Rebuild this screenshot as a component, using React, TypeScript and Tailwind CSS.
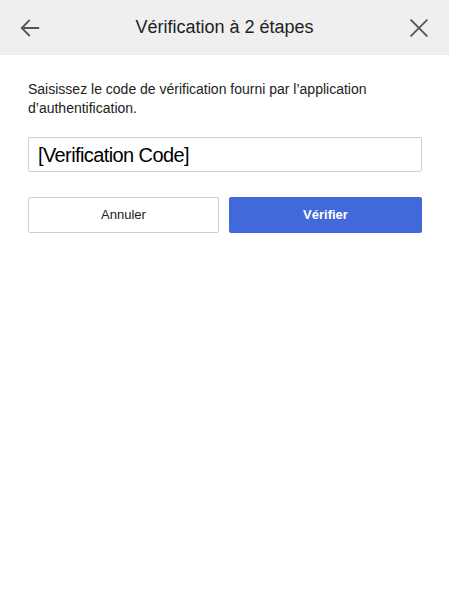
export default function App() {
  return (
    <div className="flex h-[600px] w-[449px] flex-col bg-white font-['Liberation_Sans',Arial,sans-serif] text-[#202124]">
      {/* Header */}
      <div className="flex h-[55px] flex-none items-center justify-between bg-[#efefef] pl-[19px] pr-[19px]">
        <svg width="22" height="22" viewBox="0 0 24 24" fill="none" stroke="#555" strokeWidth="2" strokeLinecap="square">
          <path d="M21 12H4M11 4l-8 8 8 8" />
        </svg>
        <div className="text-[18px] text-[#222]">Vérification à 2 étapes</div>
        <svg width="22" height="22" viewBox="0 0 24 24" fill="none" stroke="#555" strokeWidth="2" strokeLinecap="square">
          <path d="M3.5 3.5l17 17M20.5 3.5l-17 17" />
        </svg>
      </div>

      {/* Body */}
      <div className="flex flex-col pl-[28px] pr-[27px] pt-[25px]">
        <p className="text-[14px] leading-[19px] text-[#222]">
          Saisissez le code de vérification fourni par l’application d’authentification.
        </p>
        <div className="mt-[19px] flex h-[35px] items-center rounded-[2px] border border-[#cfcfcf] px-[9px] text-[20px] tracking-[-0.6px] text-black">
          [Verification Code]
        </div>
        <div className="mt-[25px] flex gap-[10px]">
          <button className="h-[36px] w-[191px] flex-none rounded-[2px] border border-[#cfcfcf] bg-white text-[13px] text-[#222]">
            Annuler
          </button>
          <button className="h-[36px] flex-1 rounded-[2px] bg-[#4169d9] text-[13px] font-bold text-white">
            Vérifier
          </button>
        </div>
      </div>
    </div>
  );
}
